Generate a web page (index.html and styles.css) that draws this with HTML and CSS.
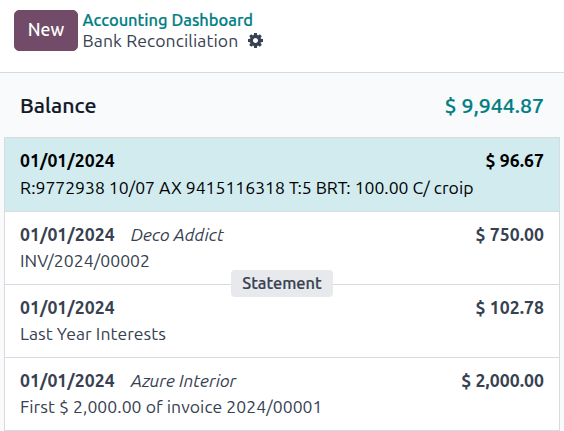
FILE: index.html
```
<!DOCTYPE html>
<html lang="en">
<head>
<meta charset="utf-8">
<title>Bank Reconciliation</title>
<link rel="stylesheet" href="styles.css">
</head>
<body>
<header class="control-panel">
  <button class="btn-new" type="button">New</button>
  <div class="breadcrumb">
    <a class="crumb-link">Accounting Dashboard</a>
    <div class="crumb-current"><span>Bank Reconciliation</span>
      <svg class="gear" viewBox="0 0 1536 1536"><path fill="currentColor" d="M1024 768q0-106-75-181t-181-75-181 75-75 181 75 181 181 75 181-75 75-181zm512-109v222q0 12-8 23t-20 13l-185 28q-19 54-39 91 35 50 107 138 10 12 10 25t-9 23q-27 37-99 108t-94 71q-12 0-26-9l-138-108q-44 23-91 38-16 136-29 186-7 28-36 28H657q-14 0-24.500-8.500T621 1506l-28-184q-49-16-90-37l-141 107q-10 9-25 9-14 0-25-11-126-114-165-168-7-10-7-23 0-12 8-23 15-21 51-66.500t54-70.500q-27-50-41-99L29 913q-13-2-21-12.500T0 877V655q0-12 8-23t19-13l186-28q14-46 39-92-40-57-107-138-10-12-10-24 0-10 9-23 26-36 98.500-107.500T337 135q13 0 26 10l138 107q44-23 91-38 16-136 29-186 7-28 36-28h222q14 0 24.500 8.500T915 30l28 184q49 16 90 37l142-107q9-9 24-9 13 0 25 10 129 119 165 170 7 8 7 22 0 12-8 23-15 21-51 66.500t-54 70.500q26 50 41 98l183 28q13 2 21 12.500t8 23.500z"/></svg>
    </div>
  </div>
</header>
<main class="journal">
  <div class="balance"><span class="balance-label">Balance</span><span class="balance-amount">$ 9,944.87</span></div>
  <section class="lines">
    <article class="line selected">
      <div class="line-top"><span class="date">01/01/2024</span><span class="amount">$ 96.67</span></div>
      <div class="memo">R:9772938 10/07 AX 9415116318 T:5 BRT: 100.00 C/ croip</div>
    </article>
    <article class="line">
      <div class="line-top"><span class="date">01/01/2024</span><span class="partner">Deco Addict</span><span class="amount">$ 750.00</span></div>
      <div class="memo">INV/2024/00002</div>
      <span class="statement">Statement</span>
    </article>
    <article class="line">
      <div class="line-top"><span class="date">01/01/2024</span><span class="amount">$ 102.78</span></div>
      <div class="memo">Last Year Interests</div>
    </article>
    <article class="line">
      <div class="line-top"><span class="date">01/01/2024</span><span class="partner">Azure Interior</span><span class="amount">$ 2,000.00</span></div>
      <div class="memo">First $ 2,000.00 of invoice 2024/00001</div>
    </article>
  </section>
</main>
</body>
</html>
```
FILE: styles.css
```
* { box-sizing: border-box; }
body {
  margin: 0;
  height: 431px;
  overflow: hidden;
  background: #f9fafb;
  color: #374151;
  font: 17.6px/24px Ubuntu, "Noto Sans", sans-serif;
  white-space: nowrap;
}
.control-panel {
  display: flex;
  height: 73px;
  padding: 10px 14px 0;
  gap: 4.6px;
  background: #fff;
  border-bottom: 1px solid #d8dadd;
}
.btn-new {
  width: 64px;
  height: 41px;
  padding: 0 0 1px;
  border: 1px solid #714b67;
  border-radius: 5px;
  background: #714b67;
  color: #fff;
  font: 500 17.6px/24px Ubuntu, "Noto Sans", sans-serif;
}
.breadcrumb { line-height: 21px; }
.crumb-link {
  display: block;
  color: #017e84;
  font-weight: 500;
  font-size: 16.45px;
  -webkit-text-stroke: 0.2px currentColor;
}
.crumb-current {
  display: flex;
  align-items: center;
  gap: 10px;
  margin-top: -1px;
  letter-spacing: 0.08px;
}
.gear { width: 15px; height: 15px; }
.balance {
  display: flex;
  justify-content: space-between;
  align-items: center;
  height: 64px;
  padding: 0 20px 1px;
  font-size: 21.3px;
  font-weight: 500;
  -webkit-text-stroke: 0.2px currentColor;
}
.balance-label { color: #111827; }
.balance-amount { color: #017e84; }
.lines { margin: 0 4px; border: 1px solid #d8dadd; background: #fff; }
.line { position: relative; height: 73px; padding: 11px 15px 0; border-bottom: 1px solid #d8dadd; }
.line:last-child { border-bottom: 0; height: 72px; }
.line.selected { height: 74px; background: #d1ebef; color: #000; }
.line-top { display: flex; }
.date, .amount { font-weight: 700; letter-spacing: 0.05px; }
.amount { margin-left: auto; }
.partner { margin-left: 16px; font-style: italic; }
.memo { margin-top: 2px; letter-spacing: 0.04px; }
.selected .memo { margin-top: 3px; letter-spacing: -0.01px; }
.statement {
  position: absolute;
  left: 226px;
  bottom: -13px;
  z-index: 1;
  width: 102px;
  height: 27px;
  border-radius: 4px;
  background: #e7e9ed;
  font-size: 16.4px;
  font-weight: 500;
  line-height: 27px;
  text-align: center;
  -webkit-text-stroke: 0.2px currentColor;
}
```
